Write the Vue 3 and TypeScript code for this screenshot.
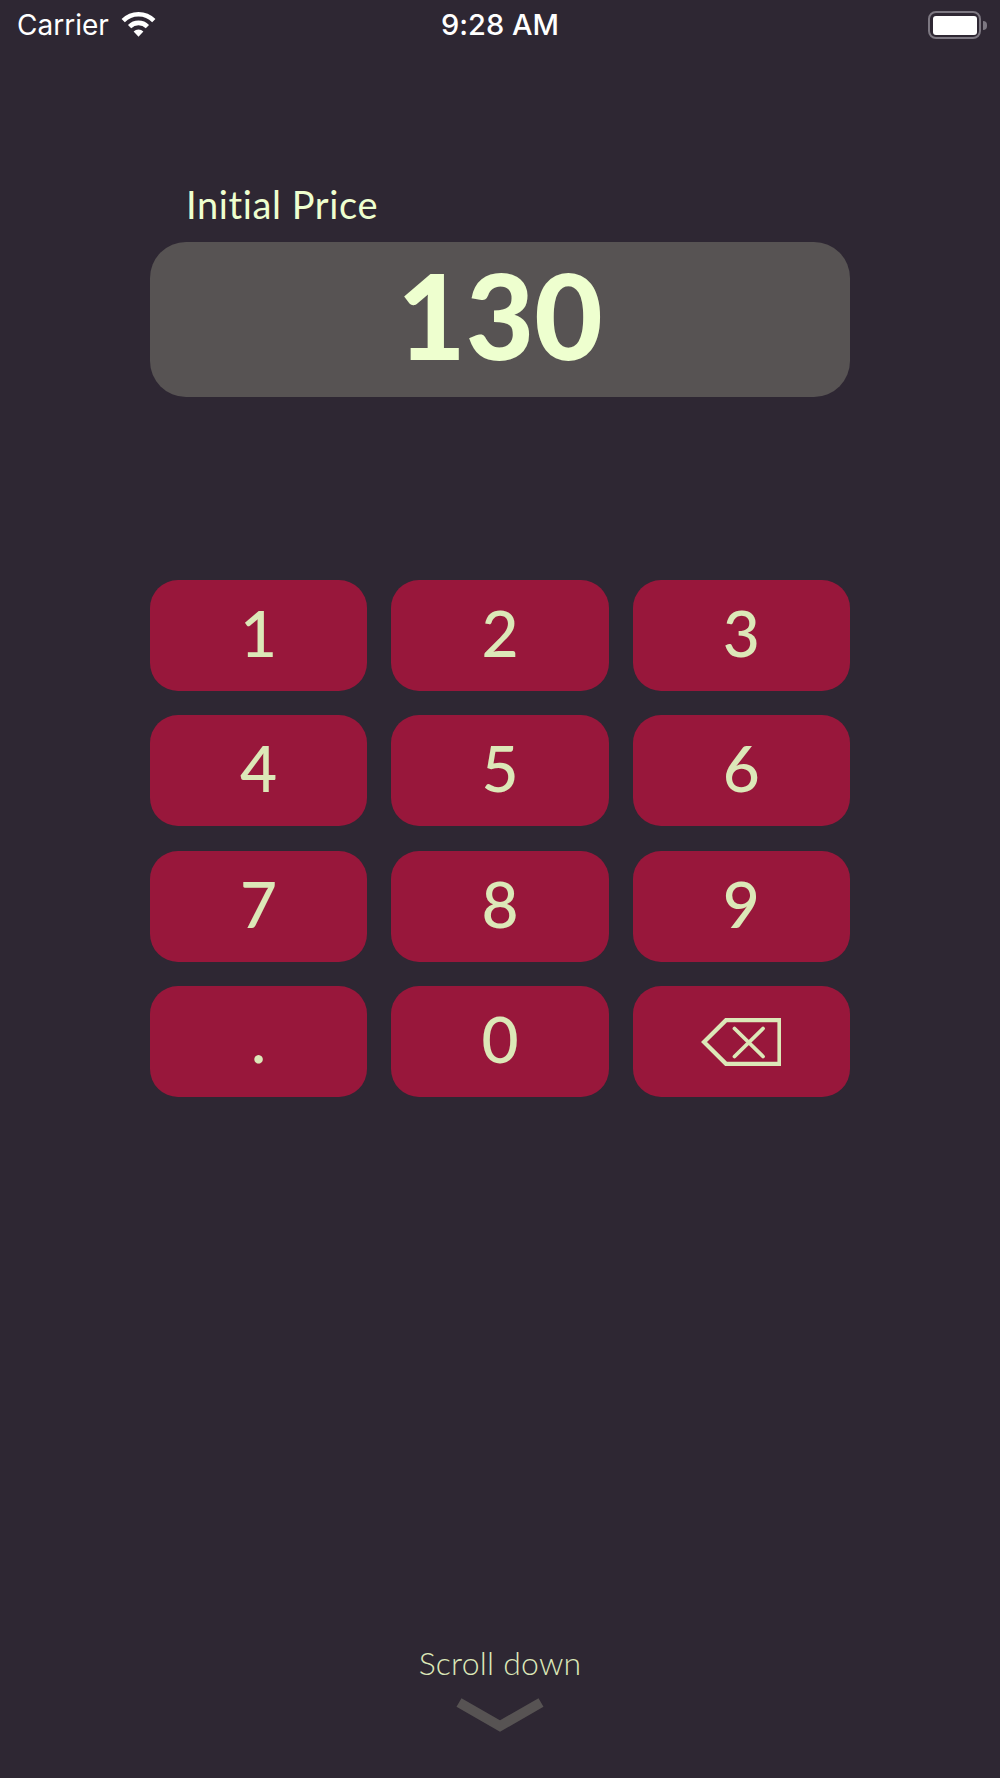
<script setup lang="ts">
const keys: string[] = ['1', '2', '3', '4', '5', '6', '7', '8', '9', '.', '0']
</script>

<template>
  <div class="page">
    <header class="status">
      <div class="status-left">
        <span class="carrier">Carrier</span>
        <svg class="wifi" viewBox="0 0 37 27" width="37" height="27">
          <path d="M3.2 10.6a21.5 21.5 0 0 1 30.6 0" fill="none" stroke="#fff" stroke-width="4.6" />
          <path d="M9.6 16.6a12.6 12.6 0 0 1 17.8 0" fill="none" stroke="#fff" stroke-width="4.6" />
          <path d="M13.6 21.6a7 7 0 0 1 9.8 0L18.5 26.8z" fill="#fff" />
        </svg>
      </div>
      <span class="time">9:28 AM</span>
      <div class="battery">
        <div class="battery-body"><div class="battery-fill"></div></div>
        <div class="battery-nub"></div>
      </div>
    </header>

    <main class="content">
      <label class="field-label">Initial Price</label>
      <div class="display">130</div>

      <div class="keypad">
        <button v-for="k in keys" :key="k" class="key" type="button">{{ k }}</button>
        <button class="key key-icon" type="button" aria-label="Delete">
          <svg class="del" viewBox="0 0 80 48" width="80" height="48">
            <path d="M25 2.2H78.5V45.8H25L3 24z" fill="none" stroke="#dce8b8" stroke-width="4.2" />
            <path d="M33.5 10.5L62 38.5M62 10.5L33.5 38.5" fill="none" stroke="#dce8b8" stroke-width="3.8" stroke-linecap="round" />
          </svg>
        </button>
      </div>
    </main>

    <footer class="scroll">
      <span class="scroll-text">Scroll down</span>
      <svg class="chevron" viewBox="0 0 92 34" width="92" height="34">
        <path d="M5 4.5L46 28L87 4.5" fill="none" stroke="#575353" stroke-width="10" />
      </svg>
    </footer>
  </div>
</template>

<style>
html, body { margin: 0; background: #2e2733; }
</style>

<style scoped>
.page {
  width: 1000px;
  height: 1778px;
  background: #2e2733;
  display: flex;
  flex-direction: column;
  font-family: Lato, "Noto Sans", sans-serif;
  font-variant-ligatures: none;
  overflow: hidden;
}
.status {
  height: 50px;
  flex: none;
  display: grid;
  grid-template-columns: 1fr auto 1fr;
  align-items: center;
  padding: 0 13px;
  color: #fff;
  font-family: Inter, "Liberation Sans", sans-serif;
}
.status-left { display: flex; align-items: center; gap: 11px; padding-left: 4px; }
.carrier { font-size: 28px; line-height: 50px; }
.wifi { margin-top: -4px; }
.time { font-size: 29px; font-weight: 500; line-height: 50px; }
.battery { justify-self: end; display: flex; align-items: center; gap: 2px; }
.battery-body {
  width: 53px;
  height: 28px;
  box-sizing: border-box;
  border: 2.5px solid #7d7882;
  border-radius: 8px;
  padding: 2.5px;
  background: transparent;
}
.battery-fill { width: 100%; height: 100%; background: #fff; border-radius: 3px; }
.battery-nub { width: 4px; height: 9px; background: #7d7882; border-radius: 0 4px 4px 0; }

.content {
  flex: none;
  width: 700px;
  margin-left: 150px;
}
.field-label {
  display: block;
  margin: 124px 0 0 36px;
  padding-bottom: 8px;
  font-size: 38px;
  line-height: 60px;
  letter-spacing: 0.6px;
  color: #eeffcf;
}
.display {
  height: 155px;
  padding-bottom: 10px;
  box-sizing: border-box;
  background: #575353;
  border-radius: 36px;
  display: flex;
  align-items: center;
  justify-content: center;
  color: #eeffcf;
  font-size: 118px;
  font-weight: 900;
}
.keypad {
  margin-top: 183px;
  display: grid;
  grid-template-columns: repeat(3, 1fr);
  grid-auto-rows: 111px;
  column-gap: 24px;
  row-gap: 24.4px;
}
.key {
  border: 0;
  padding: 0 0 6px;
  background: #98173b;
  border-radius: 28px;
  color: #dce8b8;
  font-family: inherit;
  font-size: 64px;
  font-weight: 500;
  display: flex;
  align-items: center;
  justify-content: center;
}
.key-icon { padding: 0; }
.del { display: block; }
.scroll {
  margin-top: auto;
  padding-bottom: 46px;
  display: flex;
  flex-direction: column;
  align-items: center;
}
.scroll-text {
  font-size: 32px;
  font-weight: 300;
  line-height: 40px;
  letter-spacing: 0.2px;
  color: #dce8b8;
}
.chevron { margin-top: 15px; display: block; }
</style>
